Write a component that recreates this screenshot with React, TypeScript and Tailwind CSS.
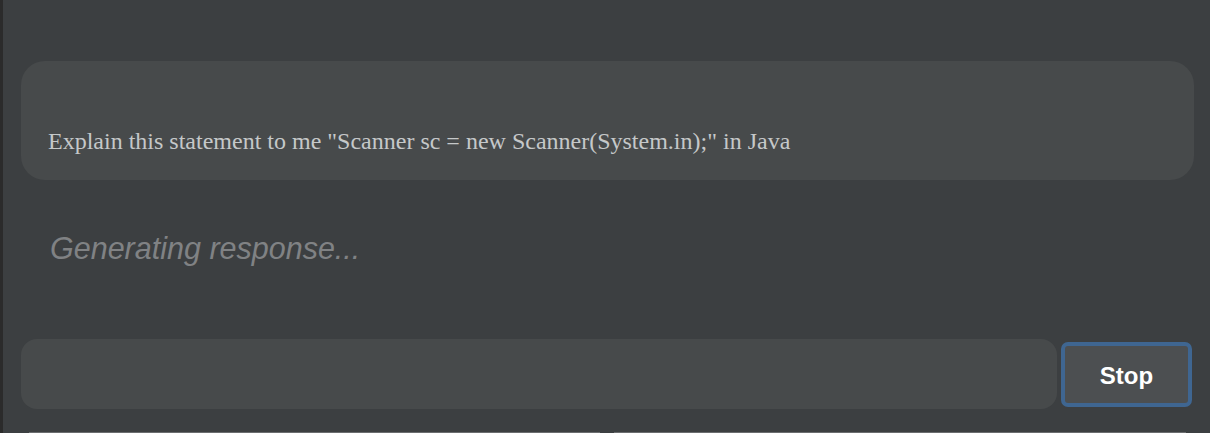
import {useState} from "react";

const prompt = 'Explain this statement to me "Scanner sc = new Scanner(System.in);" in Java';

export default function App() {
    const [value, setValue] = useState("");

    return (
        <div className="relative h-[433px] w-full overflow-hidden bg-[#3c3f41]">
            {/*window edge*/}
            <div className="absolute left-0 top-0 h-full w-[3px] bg-[#2b2b2b]"/>

            <div className="flex h-full flex-col pl-[21px] pr-[16px] pt-[61px] pb-[24px]">
                {/*question bubble*/}
                <div className="flex h-[119px] items-end rounded-[24px] bg-[#474a4b] px-[27px] pb-[27px]">
                    <p className="text-[24px] leading-none text-[#c5c8c9] [font-family:'Liberation_Serif',serif]">
                        {prompt}
                    </p>
                </div>

                {/*status*/}
                <p className="mt-[53px] pl-[29px] text-[30.5px] italic leading-none text-[#808284] [font-family:'Liberation_Sans',Arial,sans-serif]">
                    Generating response...
                </p>

                {/*input row*/}
                <div className="mt-auto flex items-center gap-[4px] pr-[2px]">
                    <input
                        value={value}
                        onChange={e => setValue(e.target.value)}
                        className="h-[70px] flex-1 rounded-[16px] bg-[#474a4b] px-4 text-[#c5c8c9] outline-none"
                    />
                    <button
                        className="h-[65px] w-[131px] rounded-[7px] border-[4px] border-[#3f6691] bg-[#4c4f51] pt-[3px] text-[24px] font-bold text-white [font-family:'Liberation_Sans',Arial,sans-serif]">
                        Stop
                    </button>
                </div>
            </div>

            {/*peeking bar below*/}
            <div className="absolute bottom-0 left-[29px] flex h-px w-[1157px] gap-[14px]">
                <div className="h-full w-[571px] bg-[#6b6d6f]"/>
                <div className="h-full flex-1 bg-[#6b6d6f]"/>
            </div>
        </div>
    );
}
